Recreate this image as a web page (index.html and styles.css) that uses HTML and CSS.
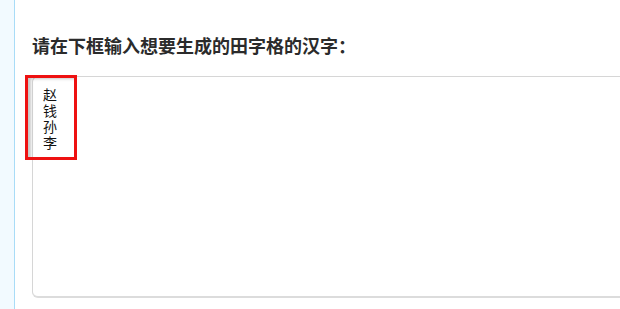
FILE: index.html
```html
<!DOCTYPE html>
<html lang="zh">
<head>
<meta charset="utf-8">
<link rel="stylesheet" href="styles.css">
</head>
<body>
<div class="page">
  <aside class="rail"></aside>
  <main class="main">
    <h2 class="title">请在下框输入想要生成的田字格的汉字：</h2>
    <div class="field">
      <textarea class="input">赵
钱
孙
李</textarea>
      <div class="mark"></div>
    </div>
  </main>
</div>
</body>
</html>
```
FILE: styles.css
```css
html, body {
  margin: 0;
  padding: 0;
  background: #ffffff;
  overflow: hidden;
}
.page {
  display: flex;
  width: 620px;
  height: 309px;
  overflow: hidden;
}
.rail {
  width: 14px;
  flex: none;
  background: #f2faff;
  border-right: 1px solid #a9dcf7;
}
.main {
  flex: 1;
  padding-left: 17px;
  min-width: 0;
  overflow: hidden;
}
.title {
  margin: 33px 0 0 0;
  font-family: "Noto Sans CJK SC", sans-serif;
  font-size: 18px;
  line-height: 25px;
  font-weight: bold;
  color: #2b2b2b;
  white-space: nowrap;
}
.field {
  position: relative;
  margin-top: 18px;
  width: calc(100% + 20px);
}
.input {
  display: block;
  box-sizing: border-box;
  width: 100%;
  height: 222px;
  margin: 0;
  padding: 9px 10px;
  border: 1px solid #d6d6d6;
  border-bottom: 2px solid #dcdcdc;
  border-radius: 6px;
  resize: none;
  outline: none;
  font-family: "Noto Sans CJK SC", sans-serif;
  font-size: 14px;
  line-height: 16px;
  font-weight: normal;
  color: #111111;
  background: #ffffff;
}
.mark {
  position: absolute;
  left: -7px;
  top: -1px;
  width: 46px;
  height: 79px;
  border: 3px solid #ee1111;
  box-shadow: inset 5px 3px 3px -2px rgba(0, 0, 0, 0.22);
  pointer-events: none;
}
```
